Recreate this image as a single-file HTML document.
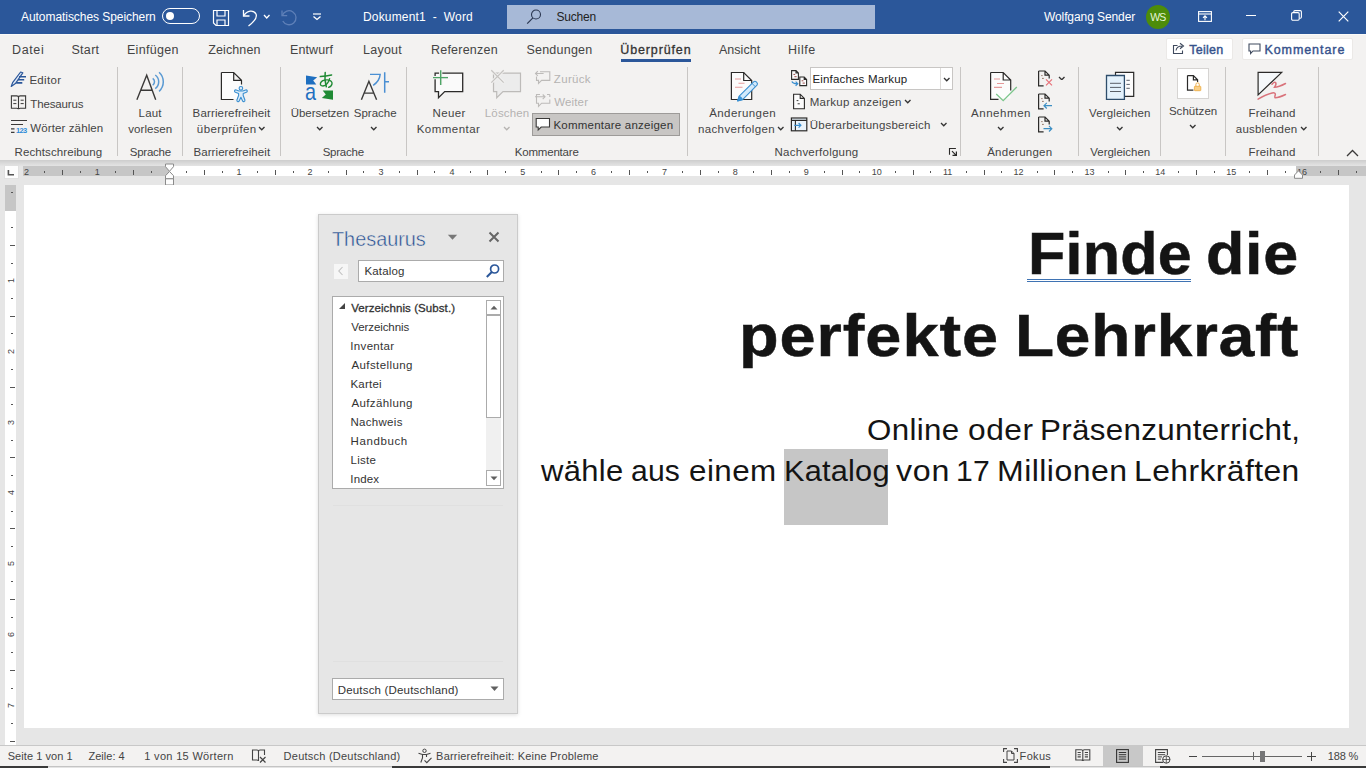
<!DOCTYPE html>
<html><head><meta charset="utf-8"><title>Dokument1 - Word</title><style>
html,body{margin:0;padding:0;}
body{width:1366px;height:768px;overflow:hidden;position:relative;background:#e6e6e6;font-family:"Liberation Sans",sans-serif;}
.t{position:absolute;white-space:pre;display:block;}
.r{position:absolute;display:block;box-sizing:border-box;}
</style></head><body>
<div class="r" style="left:0px;top:0px;width:1366px;height:34px;background:#2b579a;"></div>
<span class="t" style="left:21.00px;top:10px;font-size:12px;line-height:14px;letter-spacing:-0.059px;color:#ffffff;">Automatisches Speichern</span>
<div class="r" style="left:162px;top:8px;width:38px;height:16px;background:transparent;border:1.3px solid #fff;border-radius:8px;"></div>
<div class="r" style="left:166px;top:12px;width:8px;height:8px;background:#fff;border-radius:4px;"></div>
<svg class="r" style="left:212px;top:9px;" width="18" height="18" viewBox="0 0 18 18" fill="none"><path d="M1.5 1.5 H16.5 V16.5 H4 L1.5 14 Z" stroke="#fff" stroke-width="1.2"/><path d="M5 1.5 V7 H13 V1.5 M5 16.5 V11 H13 V16.5" stroke="#fff" stroke-width="1.2"/></svg>
<svg class="r" style="left:242px;top:8px;" width="18" height="19" viewBox="0 0 18 19" fill="none"><path d="M1.5 2 V8 H7.5" stroke="#fff" stroke-width="1.3"/><path d="M2 7.5 C5 2.5 11.5 1.5 14 6 C15.5 9.5 13 13 6.5 18" stroke="#fff" stroke-width="1.3"/></svg>
<svg class="r" style="left:262.75px;top:14.0px;" width="7.5" height="5" viewBox="0 0 7.5 5" fill="none"><path d="M1 1 L3.75 4 L6.5 1" stroke="#fff" stroke-width="1.3"/></svg>
<svg class="r" style="left:280px;top:8px;" width="18" height="19" viewBox="0 0 18 19" fill="none"><path d="M2 2.4 V7.6 H7.2" stroke="#5f80b8" stroke-width="1.3"/><path d="M2.4 7.4 A7 7 0 1 1 2.8 13" stroke="#5f80b8" stroke-width="1.3"/></svg>
<svg class="r" style="left:312px;top:11px;" width="10" height="10" viewBox="0 0 10 10" fill="none"><path d="M1 3 H9" stroke="#fff" stroke-width="1.2"/><path d="M1.5 5.5 L5 8.5 L8.5 5.5" stroke="#fff" stroke-width="1.3"/></svg>
<span class="t" style="left:363.04px;top:10px;font-size:12px;line-height:14px;letter-spacing:0.152px;color:#ffffff;">Dokument1  -  Word</span>
<div class="r" style="left:507px;top:5px;width:368px;height:24px;background:#a7b9d7;"></div>
<svg class="r" style="left:525px;top:8.2px;" width="18" height="18" viewBox="0 0 18 18" fill="none"><circle cx="11" cy="6.5" r="4.5" stroke="#2a3650" stroke-width="1.1"/><path d="M7.9 9.8 L2.2 15.6" stroke="#2a3650" stroke-width="1.2"/></svg>
<span class="t" style="left:556.46px;top:10px;font-size:12px;line-height:14px;letter-spacing:-0.172px;color:#222;">Suchen</span>
<span class="t" style="left:1043.94px;top:10px;font-size:12px;line-height:14px;letter-spacing:-0.087px;color:#ffffff;">Wolfgang Sender</span>
<div class="r" style="left:1146px;top:5px;width:24px;height:24px;background:#4d8c0a;border-radius:12px;"></div>
<span class="t" style="left:1150.15px;top:11px;font-size:10.5px;line-height:12px;letter-spacing:-0.780px;color:#e8f5d8;">WS</span>
<svg class="r" style="left:1197.5px;top:10.6px;" width="14" height="11" viewBox="0 0 14 11" fill="none"><rect x="0.6" y="0.6" width="12.8" height="9.8" stroke="#fff" stroke-width="1.1"/><path d="M0.6 3 H13.4" stroke="#fff" stroke-width="1.1"/><path d="M7 9.2 V5 M5 6.8 L7 4.8 L9 6.8" stroke="#fff" stroke-width="1.1"/></svg>
<div class="r" style="left:1246px;top:14.7px;width:10px;height:1.2px;background:#fff;"></div>
<svg class="r" style="left:1291.2px;top:10.4px;" width="11" height="11" viewBox="0 0 11 11" fill="none"><rect x="0.6" y="2.6" width="7.6" height="7.6" rx="1.2" stroke="#fff" stroke-width="1.1"/><path d="M2.8 2.4 V1.7 Q2.8 0.6 3.9 0.6 H9.3 Q10.4 0.6 10.4 1.7 V7.1 Q10.4 8.2 9.3 8.2 H8.4" stroke="#fff" stroke-width="1.1"/></svg>
<svg class="r" style="left:1337.5px;top:10.8px;" width="11" height="11" viewBox="0 0 11 11" fill="none"><path d="M0.7 0.7 L10.3 10.3 M10.3 0.7 L0.7 10.3" stroke="#fff" stroke-width="1.2"/></svg>
<div class="r" style="left:0px;top:34px;width:1366px;height:127px;background:#f3f2f1;"></div>
<div class="r" style="left:0px;top:34px;width:1366px;height:1px;background:#fafaf9;"></div>
<span class="t" style="left:12.00px;top:43px;font-size:12.5px;line-height:14px;letter-spacing:0.622px;color:#444;">Datei</span>
<span class="t" style="left:71.44px;top:43px;font-size:12.5px;line-height:14px;letter-spacing:0.312px;color:#444;">Start</span>
<span class="t" style="left:127.00px;top:43px;font-size:12.5px;line-height:14px;letter-spacing:0.286px;color:#444;">Einfügen</span>
<span class="t" style="left:208.22px;top:43px;font-size:12.5px;line-height:14px;letter-spacing:0.107px;color:#444;">Zeichnen</span>
<span class="t" style="left:290.00px;top:43px;font-size:12.5px;line-height:14px;letter-spacing:0.104px;color:#444;">Entwurf</span>
<span class="t" style="left:363.00px;top:43px;font-size:12.5px;line-height:14px;letter-spacing:0.252px;color:#444;">Layout</span>
<span class="t" style="left:431.00px;top:43px;font-size:12.5px;line-height:14px;letter-spacing:0.221px;color:#444;">Referenzen</span>
<span class="t" style="left:526.44px;top:43px;font-size:12.5px;line-height:14px;letter-spacing:0.230px;color:#444;">Sendungen</span>
<span class="t" style="left:719.00px;top:43px;font-size:12.5px;line-height:14px;letter-spacing:0.021px;color:#444;">Ansicht</span>
<span class="t" style="left:788.00px;top:43px;font-size:12.5px;line-height:14px;letter-spacing:0.541px;color:#444;">Hilfe</span>
<span class="t" style="left:620.26px;top:43px;font-size:12.5px;line-height:14px;letter-spacing:0.872px;color:#333;-webkit-text-stroke:0.3px #333;">Überprüfen</span>
<div class="r" style="left:621px;top:59px;width:70px;height:3px;background:#2b579a;"></div>
<div class="r" style="left:1166px;top:38px;width:67px;height:22px;background:#fff;border:1px solid #ebe9e7;border-radius:2px;"></div>
<svg class="r" style="left:1172px;top:42px;" width="14" height="13" viewBox="0 0 14 13" fill="none"><path d="M5.5 3.5 H1.5 V11.5 H10.5 V8.5" stroke="#3f4a5e" stroke-width="1.1"/><path d="M4 8.5 C4.5 5.5 7 4 10 4 M8 1.2 L11.5 4 L8 6.8" stroke="#3f4a5e" stroke-width="1.1"/></svg>
<span class="t" style="left:1189.25px;top:43px;font-size:12.5px;line-height:14px;letter-spacing:0.268px;color:#36528c;-webkit-text-stroke:0.4px #36528c;">Teilen</span>
<div class="r" style="left:1241.5px;top:38px;width:111.5px;height:22px;background:#fff;border:1px solid #ebe9e7;border-radius:2px;"></div>
<svg class="r" style="left:1248px;top:43px;" width="13" height="12" viewBox="0 0 13 12" fill="none"><path d="M1 1 H12 V8 H5 L2.6 10.6 V8 H1 Z" stroke="#3f4a5e" stroke-width="1.1"/></svg>
<span class="t" style="left:1264.40px;top:43px;font-size:12.5px;line-height:14px;letter-spacing:0.933px;color:#36528c;-webkit-text-stroke:0.4px #36528c;">Kommentare</span>
<div class="r" style="left:0px;top:160px;width:1366px;height:6px;background:linear-gradient(#cdcdcd,#d9d9d9 50%,#e4e4e4);"></div>
<div class="r" style="left:117.0px;top:67px;width:1px;height:89px;background:#c8c6c4;"></div>
<div class="r" style="left:182.0px;top:67px;width:1px;height:89px;background:#c8c6c4;"></div>
<div class="r" style="left:280.2px;top:67px;width:1px;height:89px;background:#c8c6c4;"></div>
<div class="r" style="left:406.1px;top:67px;width:1px;height:89px;background:#c8c6c4;"></div>
<div class="r" style="left:687.2px;top:67px;width:1px;height:89px;background:#c8c6c4;"></div>
<div class="r" style="left:960.3px;top:67px;width:1px;height:89px;background:#c8c6c4;"></div>
<div class="r" style="left:1078.1px;top:67px;width:1px;height:89px;background:#c8c6c4;"></div>
<div class="r" style="left:1159.8px;top:67px;width:1px;height:89px;background:#c8c6c4;"></div>
<div class="r" style="left:1225.1px;top:67px;width:1px;height:89px;background:#c8c6c4;"></div>
<div class="r" style="left:1318.2px;top:67px;width:1px;height:89px;background:#c8c6c4;"></div>
<span class="t" style="left:29.38px;top:74px;font-size:11.5px;line-height:12px;letter-spacing:0.315px;color:#444;">Editor</span>
<span class="t" style="left:30.37px;top:98px;font-size:11.5px;line-height:12px;letter-spacing:-0.163px;color:#444;">Thesaurus</span>
<span class="t" style="left:30.24px;top:122px;font-size:11.5px;line-height:12px;letter-spacing:0.118px;color:#444;">Wörter zählen</span>
<span class="t" style="left:14.48px;top:146px;font-size:11.5px;line-height:12px;letter-spacing:0.104px;color:#444;">Rechtschreibung</span>
<svg class="r" style="left:10px;top:70px;" width="18" height="18" viewBox="0 0 18 18" fill="none"><path d="M1.2 16.4 L2.8 12.3 L10.6 2 L12.8 2.8 L5.4 13.6 Z" stroke="#2b579a" stroke-width="1.2" stroke-linejoin="round" fill="#dfe8f5"/><path d="M9 6.8 H16 M8 9.8 H14.2 M6.2 12.9 H12.3" stroke="#2b579a" stroke-width="1.6"/></svg>
<svg class="r" style="left:10px;top:94px;" width="18" height="17" viewBox="0 0 18 17" fill="none"><path d="M1.4 1.9 H6.8 Q8.5 1.9 8.5 3.4 V15.3 Q8.5 14.3 6.8 14.3 H1.4 Z M15.6 1.9 H10.2 Q8.5 1.9 8.5 3.4 V15.3 Q8.5 14.3 10.2 14.3 H15.6 Z" stroke="#3b3a39" stroke-width="1.1"/><path d="M3.3 6.2 H6.4 M3.3 9.6 H6.4 M10.6 6.2 H13.7 M10.6 9.6 H13.7" stroke="#3b3a39" stroke-width="1"/></svg>
<svg class="r" style="left:10px;top:118px;" width="18" height="17" viewBox="0 0 18 17" fill="none"><path d="M1 2.5 H17 M1 6.5 H13" stroke="#3b3a39" stroke-width="1.1"/><path d="M1 10.8 H4.5 M1 14.3 H4.5" stroke="#3b3a39" stroke-width="1.2"/></svg>
<span class="t" style="left:15.95px;top:126px;font-size:7.5px;line-height:9px;letter-spacing:-0.587px;color:#2e8bd8;font-weight:bold;">123</span>
<span class="t" style="left:138.58px;top:107px;font-size:11.5px;line-height:12px;letter-spacing:0.203px;color:#444;">Laut</span>
<span class="t" style="left:128.34px;top:123px;font-size:11.5px;line-height:12px;letter-spacing:0.034px;color:#444;">vorlesen</span>
<span class="t" style="left:129.78px;top:146px;font-size:11.5px;line-height:12px;letter-spacing:-0.250px;color:#444;">Sprache</span>
<svg class="r" style="left:135px;top:70px;" width="32" height="32" viewBox="0 0 32 32" fill="none"><path d="M1.9 29.8 L11.7 5.2 L20.7 29.8 M5.6 20.3 H17.2" stroke="#3b3a39" stroke-width="1.4"/><path d="M17.71 8.36 A4.2 4.2 0 0 1 17.71 15.24 M20.24 5.00 A8.4 8.4 0 0 1 20.24 18.60 M24.08 2.22 A13 13 0 0 1 24.08 21.38" stroke="#5a9ad3" stroke-width="1.5"/></svg>
<span class="t" style="left:192.58px;top:107px;font-size:11.5px;line-height:12px;letter-spacing:0.146px;color:#444;">Barrierefreiheit</span>
<span class="t" style="left:196.85px;top:123px;font-size:11.5px;line-height:12px;letter-spacing:0.421px;color:#444;">überprüfen</span>
<svg class="r" style="left:258.25px;top:125.79999999999998px;" width="7.5" height="4.8" viewBox="0 0 7.5 4.8" fill="none"><path d="M1 1 L3.75 3.8 L6.5 1" stroke="#333" stroke-width="1.3"/></svg>
<span class="t" style="left:193.48px;top:146px;font-size:11.5px;line-height:12px;letter-spacing:0.080px;color:#444;">Barrierefreiheit</span>
<svg class="r" style="left:220px;top:71px;" width="30" height="32" viewBox="0 0 30 32" fill="none"><path d="M2 2.1 H13.4 V9.6 H20.9 V27.9 H2 Z" fill="#fcfcfc"/><path d="M1.4 1.5 H13.7 L21.5 9.3 V13.5 M1.4 1.5 V28.5 H13.5 M13.7 1.5 V9.3 H21.5" stroke="#2b2a29" stroke-width="1.2" fill="none"/><path d="M14.6 19.6 Q14.2 20.8 15.4 21.3 L18.6 22.4 V24.5 L16.9 29 Q16.6 30.2 17.7 30.6 Q18.8 30.9 19.3 29.8 L20.9 26.3 L22.5 29.8 Q23 30.9 24.1 30.6 Q25.2 30.2 24.9 29 L23.2 24.5 V22.4 L26.4 21.3 Q27.6 20.8 27.2 19.6 Q26.7 18.6 25.6 19 L22.8 20 H19 L16.2 19 Q15.1 18.6 14.6 19.6 Z" stroke="#3a8fd0" stroke-width="1.1" fill="#dcecf9" stroke-linejoin="round"/><circle cx="20.9" cy="17.3" r="1.8" stroke="#3a8fd0" stroke-width="1.1" fill="#dcecf9"/></svg>
<span class="t" style="left:290.74px;top:107px;font-size:11.5px;line-height:12px;letter-spacing:-0.057px;color:#444;">Übersetzen</span>
<svg class="r" style="left:315.55px;top:125.79999999999998px;" width="7.5" height="4.8" viewBox="0 0 7.5 4.8" fill="none"><path d="M1 1 L3.75 3.8 L6.5 1" stroke="#333" stroke-width="1.3"/></svg>
<span class="t" style="left:353.78px;top:107px;font-size:11.5px;line-height:12px;letter-spacing:-0.000px;color:#444;">Sprache</span>
<svg class="r" style="left:370.35px;top:125.79999999999998px;" width="7.5" height="4.8" viewBox="0 0 7.5 4.8" fill="none"><path d="M1 1 L3.75 3.8 L6.5 1" stroke="#333" stroke-width="1.3"/></svg>
<span class="t" style="left:322.68px;top:146px;font-size:11.5px;line-height:12px;letter-spacing:-0.234px;color:#444;">Sprache</span>
<svg class="r" style="left:305px;top:71px;" width="30" height="30" viewBox="0 0 30 30" fill="none"><path d="M1 4.5 L12.2 6.3 L8.2 9.6 L11.3 13.6 H1 Z" fill="#1e6fc0"/><path d="M28 28.7 L16.8 26.9 L20.8 23.6 L17.7 19.4 H28 Z" fill="#1f8a34"/><path d="M15.3 5.6 Q21 5.2 26.6 4" stroke="#1f8a34" stroke-width="1.5" stroke-linecap="round"/><path d="M20.2 1.5 Q19.2 8.5 21.3 15.8" stroke="#1f8a34" stroke-width="1.5" stroke-linecap="round"/><path d="M24.6 7.6 Q22.6 14.6 18 15 Q14.6 15 15.6 11.8 Q17.3 8.6 22.5 8.9 Q27.5 9.5 27 12.8 Q26.6 15.3 23.6 16.3" stroke="#1f8a34" stroke-width="1.4" stroke-linecap="round"/></svg>
<span class="t" style="left:305.11px;top:78px;font-size:24px;line-height:27px;letter-spacing:0.000px;color:#1e6fc0;transform:scaleX(0.8252);transform-origin:0 0;">a</span>
<svg class="r" style="left:359px;top:71px;" width="32" height="30" viewBox="0 0 32 30" fill="none"><path d="M2.4 28.7 L9.9 10.3 L17.6 28.7 M5 22.1 H14.9" stroke="#3b3a39" stroke-width="1.4"/><path d="M11 3.4 H21.2 Q20.6 10 14.2 14.4" stroke="#4a8fd3" stroke-width="1.4"/><path d="M25.7 1.2 V21.7 M25.7 10.7 H30" stroke="#4a8fd3" stroke-width="1.5"/></svg>
<span class="t" style="left:432.48px;top:107px;font-size:11.5px;line-height:12px;letter-spacing:0.403px;color:#444;">Neuer</span>
<span class="t" style="left:416.68px;top:123px;font-size:11.5px;line-height:12px;letter-spacing:0.474px;color:#444;">Kommentar</span>
<span class="t" style="left:484.78px;top:107px;font-size:11.5px;line-height:12px;letter-spacing:0.166px;color:#b5b3b1;">Löschen</span>
<svg class="r" style="left:502.75px;top:126.1px;" width="7.5" height="4.8" viewBox="0 0 7.5 4.8" fill="none"><path d="M1 1 L3.75 3.8 L6.5 1" stroke="#b5b3b1" stroke-width="1.3"/></svg>
<span class="t" style="left:553.86px;top:73px;font-size:11.5px;line-height:12px;letter-spacing:0.322px;color:#b5b3b1;">Zurück</span>
<span class="t" style="left:554.14px;top:96px;font-size:11.5px;line-height:12px;letter-spacing:0.165px;color:#b5b3b1;">Weiter</span>
<div class="r" style="left:532px;top:113px;width:148px;height:23px;background:#c8c6c4;border:1px solid #9d9b99;"></div>
<span class="t" style="left:553.48px;top:119px;font-size:11.5px;line-height:12px;letter-spacing:0.215px;color:#333;">Kommentare anzeigen</span>
<span class="t" style="left:514.78px;top:146px;font-size:11.5px;line-height:12px;letter-spacing:-0.200px;color:#444;">Kommentare</span>
<svg class="r" style="left:431px;top:68px;" width="34" height="32" viewBox="0 0 34 32" fill="none"><path d="M4.1 5.2 H31.7 V23.6 H13.7 L7.5 29.8 V23.6 H4.1 Z" stroke="#2b2a29" stroke-width="1.3" fill="#fafafa"/><path d="M9.7 2.2 V16.9 M2 9.6 H17" stroke="#f3f2f1" stroke-width="3.2"/><path d="M9.7 2.2 V16.9 M2 9.6 H17" stroke="#4ea567" stroke-width="1.4"/></svg>
<svg class="r" style="left:489px;top:68px;" width="34" height="32" viewBox="0 0 34 32" fill="none"><path d="M4.5 5.2 H31.5 V23.6 H14 L7.7 29.8 V23.6 H4.5 Z" stroke="#bdbbb9" stroke-width="1.2" fill="#ececec"/><path d="M2.3 2.2 L14.7 14.6 M14.7 2.2 L2.3 14.6" stroke="#f3f2f1" stroke-width="3"/><path d="M2.3 2.2 L14.7 14.6 M14.7 2.2 L2.3 14.6" stroke="#c6c4c2" stroke-width="1.3"/></svg>
<svg class="r" style="left:534px;top:70px;" width="17" height="16" viewBox="0 0 17 16" fill="none"><path d="M6 1.8 H15.8 V10.4 H7.6 L4.5 13.5 V10.4 H2.5 V6.5" stroke="#bdbbb9" stroke-width="1.1"/><path d="M9.6 3.5 H1.5 M3.8 1.2 L1.5 3.5 L3.8 5.8" stroke="#bdbbb9" stroke-width="1.1"/></svg>
<svg class="r" style="left:534px;top:93px;" width="17" height="16" viewBox="0 0 17 16" fill="none"><path d="M6 1.5 H2.5 V10.2 H4.5 V13.3 L7.6 10.2 H15.8 V6.5" stroke="#bdbbb9" stroke-width="1.1"/><path d="M1 3.8 H11 M8.7 1.5 L11 3.8 L8.7 6.1" stroke="#bdbbb9" stroke-width="1.1"/><path d="M15.8 1.5 H13 M15.8 1.5 V4" stroke="#bdbbb9" stroke-width="1.1"/></svg>
<svg class="r" style="left:535px;top:117px;" width="16" height="15" viewBox="0 0 16 15" fill="none"><path d="M1.2 1.5 H14.5 V10 H6.2 L3.2 13 V10 H1.2 Z" stroke="#3b3a39" stroke-width="1.1" fill="#fff"/></svg>
<span class="t" style="left:709.20px;top:107px;font-size:11.5px;line-height:12px;letter-spacing:0.419px;color:#444;">Änderungen</span>
<span class="t" style="left:697.95px;top:123px;font-size:11.5px;line-height:12px;letter-spacing:0.381px;color:#444;">nachverfolgen</span>
<svg class="r" style="left:776.65px;top:126.1px;" width="7.5" height="4.8" viewBox="0 0 7.5 4.8" fill="none"><path d="M1 1 L3.75 3.8 L6.5 1" stroke="#333" stroke-width="1.3"/></svg>
<span class="t" style="left:774.58px;top:146px;font-size:11.5px;line-height:12px;letter-spacing:0.239px;color:#444;">Nachverfolgung</span>
<svg class="r" style="left:730px;top:70px;" width="30" height="33" viewBox="0 0 30 33" fill="none"><path d="M1.4 2.5 H13.7 L21.7 10.5 V29.5 H1.4 Z" stroke="#2b2a29" stroke-width="1.2" fill="#fcfcfc"/><path d="M13.7 2.5 V10.5 H21.7" stroke="#2b2a29" stroke-width="1.2"/><path d="M5 9 H11 M8.5 13.2 H14.5 M5 17.2 H12.5" stroke="#e59a9a" stroke-width="1.1"/><path d="M7.6 31 L9.2 26.2 L23.6 11.8 Q25 10.6 26.6 12.2 Q28.2 13.8 27 15.2 L12.6 29.6 Z" fill="#d3eafb" stroke="#3a8fd0" stroke-width="1.1" stroke-linejoin="round"/><path d="M7.6 31 L9.2 26.2 Q11.5 26.6 12.6 29.6 Z" fill="#3a96dd" stroke="#3a8fd0" stroke-width="0.8"/><path d="M22 13.4 L25.4 16.8" stroke="#3a8fd0" stroke-width="1"/></svg>
<svg class="r" style="left:790px;top:69px;" width="18" height="19" viewBox="0 0 18 19" fill="none"><path d="M1.6 1.6 H6 L8.4 4 V10.4 H1.6 Z M6 1.6 V4 H8.4" stroke="#2b2a29" stroke-width="1.1" fill="#fcfcfc"/><path d="M9.8 8 H14.2 L16.6 10.4 V16.6 H9.8 Z M14.2 8 V10.4 H16.6" stroke="#2b2a29" stroke-width="1.1" fill="#fcfcfc"/><path d="M3.4 5.4 H5.2 M4.4 7.7 H6.6 M11.6 11.8 H13.4 M12.6 14.1 H14.8" stroke="#9c4a4a" stroke-width="1"/><path d="M2 12.4 Q2.4 14.8 7.6 14.7 M5.6 12.6 L7.8 14.7 L5.6 16.8" stroke="#3a8fd0" stroke-width="1.2"/></svg>
<div class="r" style="left:810px;top:67px;width:143px;height:22.5px;background:#fff;border:1px solid #c8c6c4;"></div>
<div class="r" style="left:939.5px;top:68px;width:1px;height:20.5px;background:#dddbd9;"></div>
<span class="t" style="left:812.38px;top:73px;font-size:11.5px;line-height:12px;letter-spacing:0.182px;color:#222;">Einfaches Markup</span>
<svg class="r" style="left:942.65px;top:76.89999999999999px;" width="7.5" height="4.8" viewBox="0 0 7.5 4.8" fill="none"><path d="M1 1 L3.75 3.8 L6.5 1" stroke="#333" stroke-width="1.3"/></svg>
<svg class="r" style="left:792px;top:92.5px;" width="14" height="17" viewBox="0 0 14 17" fill="none"><path d="M1.6 1.2 H8.2 L12.4 5.4 V15.8 H1.6 Z M8.2 1.2 V5.4 H12.4" stroke="#2b2a29" stroke-width="1.1" fill="#fcfcfc"/><path d="M4.6 7.6 H6.4 M5.6 10.8 H7.8" stroke="#3b3a39" stroke-width="1"/></svg>
<span class="t" style="left:809.78px;top:96px;font-size:11.5px;line-height:12px;letter-spacing:0.247px;color:#444;">Markup anzeigen</span>
<svg class="r" style="left:904.05px;top:98.89999999999999px;" width="7.5" height="4.8" viewBox="0 0 7.5 4.8" fill="none"><path d="M1 1 L3.75 3.8 L6.5 1" stroke="#333" stroke-width="1.3"/></svg>
<svg class="r" style="left:790px;top:116.5px;" width="18" height="15" viewBox="0 0 18 15" fill="none"><rect x="1.4" y="1" width="15.4" height="12.8" stroke="#2b2a29" stroke-width="1.2" fill="#eaf4fc"/><path d="M1.4 3.4 H16.8 M5.4 3.4 V13.8" stroke="#2b2a29" stroke-width="1.1"/><path d="M4.2 8.3 H10.8 M8.6 6 L10.9 8.3 L8.6 10.6" stroke="#3a8fd0" stroke-width="1.2"/></svg>
<span class="t" style="left:809.84px;top:119px;font-size:11.5px;line-height:12px;letter-spacing:0.214px;color:#444;">Überarbeitungsbereich</span>
<svg class="r" style="left:939.85px;top:122.19999999999999px;" width="7.5" height="4.8" viewBox="0 0 7.5 4.8" fill="none"><path d="M1 1 L3.75 3.8 L6.5 1" stroke="#333" stroke-width="1.3"/></svg>
<svg class="r" style="left:948px;top:147px;" width="10" height="10" viewBox="0 0 10 10" fill="none"><path d="M1.5 7.7 V1.5 H7.9" stroke="#2b2a29" stroke-width="1.1"/><path d="M4 4.2 L8.2 8.4 M4.5 8.4 H8.4 V4.5" stroke="#2b2a29" stroke-width="1.2"/></svg>
<span class="t" style="left:971.00px;top:107px;font-size:11.5px;line-height:12px;letter-spacing:0.549px;color:#444;">Annehmen</span>
<svg class="r" style="left:996.65px;top:125.79999999999998px;" width="7.5" height="4.8" viewBox="0 0 7.5 4.8" fill="none"><path d="M1 1 L3.75 3.8 L6.5 1" stroke="#333" stroke-width="1.3"/></svg>
<span class="t" style="left:987.20px;top:146px;font-size:11.5px;line-height:12px;letter-spacing:0.253px;color:#444;">Änderungen</span>
<svg class="r" style="left:988px;top:70px;" width="32" height="33" viewBox="0 0 32 33" fill="none"><path d="M3.2 3.1 H15 L22.4 10.5 V28.4 H3.2Z" fill="#fcfcfc"/><path d="M2.6 2.5 H15.2 L22.7 10 V20.5 M2.6 2.5 V29.3 H10.5 M15.2 2.5 V10 H22.7" stroke="#2b2a29" stroke-width="1.2"/><path d="M6 9 H12 M9 13.5 H16 M6 17.4 H14" stroke="#e59a9a" stroke-width="1.1"/><path d="M8.2 24 L15.2 30.6 L28.8 17" stroke="#7cc68c" stroke-width="1.3"/></svg>
<svg class="r" style="left:1036.5px;top:69.5px;" width="18" height="18" viewBox="0 0 18 18" fill="none"><path d="M1.6 1 H8 L12.2 5.2 V8.6 M1.6 1 V15.8 H6.6 M8 1 V5.2 H12.2" stroke="#2b2a29" stroke-width="1.2"/><path d="M4.2 5.6 H5.6 M5 8.4 H6.8" stroke="#8a6a5a" stroke-width="0.9"/><path d="M9 9.4 L15 15.4 M15 9.4 L9 15.4" stroke="#e8727a" stroke-width="1.2"/></svg>
<svg class="r" style="left:1057.75px;top:75.6px;" width="7.5" height="4.8" viewBox="0 0 7.5 4.8" fill="none"><path d="M1 1 L3.75 3.8 L6.5 1" stroke="#333" stroke-width="1.3"/></svg>
<svg class="r" style="left:1036.5px;top:92.7px;" width="18" height="18" viewBox="0 0 18 18" fill="none"><path d="M1.6 1 H8 L12.2 5.2 V8.6 M1.6 1 V15.8 H6.6 M8 1 V5.2 H12.2" stroke="#2b2a29" stroke-width="1.2"/><path d="M4.2 5.6 H5.6 M5 8.4 H6.8" stroke="#8a6a5a" stroke-width="0.9"/><path d="M15 12.7 H7 M9.8 9.9 L7 12.7 L9.8 15.5" stroke="#3d8fc4" stroke-width="1.2"/></svg>
<svg class="r" style="left:1036.5px;top:115.5px;" width="18" height="18" viewBox="0 0 18 18" fill="none"><path d="M1.6 1 H8 L12.2 5.2 V8.6 M1.6 1 V15.8 H6.6 M8 1 V5.2 H12.2" stroke="#2b2a29" stroke-width="1.2"/><path d="M4.2 5.6 H5.6 M5 8.4 H6.8" stroke="#8a6a5a" stroke-width="0.9"/><path d="M6.5 12.7 H14.8 M12 9.9 L14.8 12.7 L12 15.5" stroke="#3d8fc4" stroke-width="1.2"/></svg>
<span class="t" style="left:1089.04px;top:107px;font-size:11.5px;line-height:12px;letter-spacing:0.132px;color:#444;">Vergleichen</span>
<svg class="r" style="left:1115.55px;top:125.79999999999998px;" width="7.5" height="4.8" viewBox="0 0 7.5 4.8" fill="none"><path d="M1 1 L3.75 3.8 L6.5 1" stroke="#333" stroke-width="1.3"/></svg>
<span class="t" style="left:1090.34px;top:146px;font-size:11.5px;line-height:12px;letter-spacing:-0.028px;color:#444;">Vergleichen</span>
<svg class="r" style="left:1104px;top:70px;" width="32" height="32" viewBox="0 0 32 32" fill="none"><path d="M11.5 2.4 H29.7 V26.4 H11.5 Z" stroke="#2b2a29" stroke-width="1.2" fill="#fcfcfc"/><path d="M22.4 10.3 H25.8 M22.4 14.4 H25.8 M22.4 18.3 H25.8" stroke="#5a6068" stroke-width="1"/><path d="M2.5 5.5 H20.4 V29.3 H2.5 Z" stroke="#2d4d6b" stroke-width="1.3" fill="#e4f2fc"/><path d="M6 13.3 H17 M6 17.4 H17 M6 21.5 H17" stroke="#5a6068" stroke-width="1"/></svg>
<div class="r" style="left:1177px;top:68px;width:32px;height:31px;background:#fff;border:1px solid #d6d4d2;"></div>
<svg class="r" style="left:1186px;top:74px;" width="17" height="18" viewBox="0 0 17 18" fill="none"><path d="M1.5 1.6 H7.4 L11.6 5.8 V8 M1.5 1.6 V16.2 H7.4 M7.4 1.6 V5.8 H11.6" stroke="#2b2a29" stroke-width="1.2"/><rect x="8.4" y="12.3" width="6.4" height="4.4" rx="0.6" fill="#f9cf86" stroke="#eeb04c" stroke-width="0.9"/><path d="M9.9 12.2 V10.6 Q9.9 8.8 11.6 8.8 Q13.3 8.8 13.3 10.6 V12.2" stroke="#eeb04c" stroke-width="1"/></svg>
<span class="t" style="left:1168.88px;top:105px;font-size:11.5px;line-height:12px;letter-spacing:0.059px;color:#444;">Schützen</span>
<svg class="r" style="left:1188.65px;top:124.0px;" width="7.5" height="4.8" viewBox="0 0 7.5 4.8" fill="none"><path d="M1 1 L3.75 3.8 L6.5 1" stroke="#333" stroke-width="1.3"/></svg>
<span class="t" style="left:1248.38px;top:107px;font-size:11.5px;line-height:12px;letter-spacing:0.243px;color:#444;">Freihand</span>
<span class="t" style="left:1235.84px;top:123px;font-size:11.5px;line-height:12px;letter-spacing:0.206px;color:#444;">ausblenden</span>
<svg class="r" style="left:1299.65px;top:125.79999999999998px;" width="7.5" height="4.8" viewBox="0 0 7.5 4.8" fill="none"><path d="M1 1 L3.75 3.8 L6.5 1" stroke="#333" stroke-width="1.3"/></svg>
<span class="t" style="left:1248.38px;top:146px;font-size:11.5px;line-height:12px;letter-spacing:0.243px;color:#444;">Freihand</span>
<svg class="r" style="left:1256px;top:70px;" width="32" height="32" viewBox="0 0 32 32" fill="none"><path d="M2.1 2.4 H25.7 L2.1 24.9 Z" stroke="#2b2a29" stroke-width="1.2" fill="#f5f8fa"/><path d="M16 14.2 Q18.6 11.4 19.7 12.7 Q20.6 14.4 18.6 17.3 Q22.5 17.2 29.5 13.5" stroke="#d9737b" stroke-width="1.5" stroke-linecap="round"/><path d="M2.1 29.2 Q10 24.5 16.2 23 Q19.6 22.2 19.3 24.8 Q18.4 27.4 19.2 27.8 Q23 27.6 29.5 24.5" stroke="#d9737b" stroke-width="1.5" stroke-linecap="round"/></svg>
<svg class="r" style="left:1346px;top:149px;" width="13" height="8" viewBox="0 0 13 8" fill="none"><path d="M1 7 L6.5 1.5 L12 7" stroke="#3b3a39" stroke-width="1.3"/></svg>
<div class="r" style="left:23px;top:166px;width:1343px;height:10px;background:#c6c6c6;"></div>
<div class="r" style="left:169px;top:166px;width:1127px;height:10px;background:#ffffff;"></div>
<span class="t" style="left:24.11px;top:167px;font-size:9px;line-height:10px;letter-spacing:0.000px;color:#444;">2</span>
<div class="r" style="left:44px;top:171px;width:1px;height:2px;background:#555;"></div>
<div class="r" style="left:62px;top:170px;width:1px;height:5px;background:#555;"></div>
<div class="r" style="left:80px;top:171px;width:1px;height:2px;background:#555;"></div>
<span class="t" style="left:94.75px;top:167px;font-size:9px;line-height:10px;letter-spacing:0.000px;color:#444;">1</span>
<div class="r" style="left:115px;top:171px;width:1px;height:2px;background:#555;"></div>
<div class="r" style="left:133px;top:170px;width:1px;height:5px;background:#555;"></div>
<div class="r" style="left:151px;top:171px;width:1px;height:2px;background:#555;"></div>
<div class="r" style="left:186px;top:171px;width:1px;height:2px;background:#555;"></div>
<div class="r" style="left:204px;top:170px;width:1px;height:5px;background:#555;"></div>
<div class="r" style="left:222px;top:171px;width:1px;height:2px;background:#555;"></div>
<span class="t" style="left:236.49px;top:167px;font-size:9px;line-height:10px;letter-spacing:0.000px;color:#444;">1</span>
<div class="r" style="left:257px;top:171px;width:1px;height:2px;background:#555;"></div>
<div class="r" style="left:275px;top:170px;width:1px;height:5px;background:#555;"></div>
<div class="r" style="left:293px;top:171px;width:1px;height:2px;background:#555;"></div>
<span class="t" style="left:307.59px;top:167px;font-size:9px;line-height:10px;letter-spacing:0.000px;color:#444;">2</span>
<div class="r" style="left:328px;top:171px;width:1px;height:2px;background:#555;"></div>
<div class="r" style="left:346px;top:170px;width:1px;height:5px;background:#555;"></div>
<div class="r" style="left:363px;top:171px;width:1px;height:2px;background:#555;"></div>
<span class="t" style="left:378.55px;top:167px;font-size:9px;line-height:10px;letter-spacing:0.000px;color:#444;">3</span>
<div class="r" style="left:399px;top:171px;width:1px;height:2px;background:#555;"></div>
<div class="r" style="left:417px;top:170px;width:1px;height:5px;background:#555;"></div>
<div class="r" style="left:434px;top:171px;width:1px;height:2px;background:#555;"></div>
<span class="t" style="left:449.60px;top:167px;font-size:9px;line-height:10px;letter-spacing:0.000px;color:#444;">4</span>
<div class="r" style="left:470px;top:171px;width:1px;height:2px;background:#555;"></div>
<div class="r" style="left:487px;top:170px;width:1px;height:5px;background:#555;"></div>
<div class="r" style="left:505px;top:171px;width:1px;height:2px;background:#555;"></div>
<span class="t" style="left:520.29px;top:167px;font-size:9px;line-height:10px;letter-spacing:0.000px;color:#444;">5</span>
<div class="r" style="left:541px;top:171px;width:1px;height:2px;background:#555;"></div>
<div class="r" style="left:558px;top:170px;width:1px;height:5px;background:#555;"></div>
<div class="r" style="left:576px;top:171px;width:1px;height:2px;background:#555;"></div>
<span class="t" style="left:591.07px;top:167px;font-size:9px;line-height:10px;letter-spacing:0.000px;color:#444;">6</span>
<div class="r" style="left:611px;top:171px;width:1px;height:2px;background:#555;"></div>
<div class="r" style="left:629px;top:170px;width:1px;height:5px;background:#555;"></div>
<div class="r" style="left:647px;top:171px;width:1px;height:2px;background:#555;"></div>
<span class="t" style="left:661.94px;top:167px;font-size:9px;line-height:10px;letter-spacing:0.000px;color:#444;">7</span>
<div class="r" style="left:682px;top:171px;width:1px;height:2px;background:#555;"></div>
<div class="r" style="left:700px;top:170px;width:1px;height:5px;background:#555;"></div>
<div class="r" style="left:718px;top:171px;width:1px;height:2px;background:#555;"></div>
<span class="t" style="left:732.85px;top:167px;font-size:9px;line-height:10px;letter-spacing:0.000px;color:#444;">8</span>
<div class="r" style="left:753px;top:171px;width:1px;height:2px;background:#555;"></div>
<div class="r" style="left:771px;top:170px;width:1px;height:5px;background:#555;"></div>
<div class="r" style="left:789px;top:171px;width:1px;height:2px;background:#555;"></div>
<span class="t" style="left:803.72px;top:167px;font-size:9px;line-height:10px;letter-spacing:0.000px;color:#444;">9</span>
<div class="r" style="left:824px;top:171px;width:1px;height:2px;background:#555;"></div>
<div class="r" style="left:842px;top:170px;width:1px;height:5px;background:#555;"></div>
<div class="r" style="left:859px;top:171px;width:1px;height:2px;background:#555;"></div>
<span class="t" style="left:871.82px;top:167px;font-size:9px;line-height:10px;letter-spacing:0.000px;color:#444;">10</span>
<div class="r" style="left:895px;top:171px;width:1px;height:2px;background:#555;"></div>
<div class="r" style="left:913px;top:170px;width:1px;height:5px;background:#555;"></div>
<div class="r" style="left:930px;top:171px;width:1px;height:2px;background:#555;"></div>
<span class="t" style="left:943.02px;top:167px;font-size:9px;line-height:10px;letter-spacing:0.000px;color:#444;">11</span>
<div class="r" style="left:966px;top:171px;width:1px;height:2px;background:#555;"></div>
<div class="r" style="left:984px;top:170px;width:1px;height:5px;background:#555;"></div>
<div class="r" style="left:1001px;top:171px;width:1px;height:2px;background:#555;"></div>
<span class="t" style="left:1013.56px;top:167px;font-size:9px;line-height:10px;letter-spacing:0.000px;color:#444;">12</span>
<div class="r" style="left:1037px;top:171px;width:1px;height:2px;background:#555;"></div>
<div class="r" style="left:1054px;top:170px;width:1px;height:5px;background:#555;"></div>
<div class="r" style="left:1072px;top:171px;width:1px;height:2px;background:#555;"></div>
<span class="t" style="left:1084.43px;top:167px;font-size:9px;line-height:10px;letter-spacing:0.000px;color:#444;">13</span>
<div class="r" style="left:1108px;top:171px;width:1px;height:2px;background:#555;"></div>
<div class="r" style="left:1125px;top:170px;width:1px;height:5px;background:#555;"></div>
<div class="r" style="left:1143px;top:171px;width:1px;height:2px;background:#555;"></div>
<span class="t" style="left:1155.30px;top:167px;font-size:9px;line-height:10px;letter-spacing:0.000px;color:#444;">14</span>
<div class="r" style="left:1178px;top:171px;width:1px;height:2px;background:#555;"></div>
<div class="r" style="left:1196px;top:170px;width:1px;height:5px;background:#555;"></div>
<div class="r" style="left:1214px;top:171px;width:1px;height:2px;background:#555;"></div>
<span class="t" style="left:1226.17px;top:167px;font-size:9px;line-height:10px;letter-spacing:0.000px;color:#444;">15</span>
<div class="r" style="left:1249px;top:171px;width:1px;height:2px;background:#555;"></div>
<div class="r" style="left:1267px;top:170px;width:1px;height:5px;background:#555;"></div>
<div class="r" style="left:1285px;top:171px;width:1px;height:2px;background:#555;"></div>
<span class="t" style="left:1297.04px;top:167px;font-size:9px;line-height:10px;letter-spacing:0.000px;color:#444;">16</span>
<div class="r" style="left:1320px;top:171px;width:1px;height:2px;background:#555;"></div>
<div class="r" style="left:1338px;top:170px;width:1px;height:5px;background:#555;"></div>
<div class="r" style="left:1356px;top:171px;width:1px;height:2px;background:#555;"></div>
<div class="r" style="left:4px;top:164.5px;width:14.5px;height:14.5px;background:#fdfdfd;border:1px solid #e0e0e0;"></div>
<svg class="r" style="left:7px;top:169px;" width="8" height="8" viewBox="0 0 8 8" fill="none"><path d="M1.4 1 V5.7 H7" stroke="#555" stroke-width="1.6"/></svg>
<svg class="r" style="left:164px;top:162.5px;" width="11" height="23" viewBox="0 0 11 23" fill="none"><path d="M1.5 1 H9.5 V3.7 L5.5 8.3 L1.5 3.7 Z" fill="#fdfdfd" stroke="#8a8a8a" stroke-width="1"/><path d="M1.5 15.8 V12.7 L5.5 8.5 L9.5 12.7 V15.8 Z" fill="#fdfdfd" stroke="#8a8a8a" stroke-width="1"/><rect x="1.5" y="15.8" width="8" height="6.2" fill="#fdfdfd" stroke="#8a8a8a" stroke-width="1"/></svg>
<svg class="r" style="left:1292.5px;top:170px;" width="11" height="9" viewBox="0 0 11 9" fill="none"><path d="M1.5 8.3 V5 L5.5 0.8 L9.5 5 V8.3 Z" fill="#fdfdfd" stroke="#8a8a8a" stroke-width="1"/></svg>
<div class="r" style="left:5px;top:185px;width:11px;height:560px;background:#ffffff;"></div>
<div class="r" style="left:5px;top:185px;width:11px;height:26px;background:#c6c6c6;"></div>
<div class="r" style="left:11px;top:192px;width:2px;height:1px;background:#555;"></div>
<div class="r" style="left:11px;top:227px;width:2px;height:1px;background:#555;"></div>
<div class="r" style="left:10px;top:245px;width:5px;height:1px;background:#555;"></div>
<div class="r" style="left:11px;top:263px;width:2px;height:1px;background:#555;"></div>
<span class="t" style="left:6px;top:274.8px;width:11px;height:11px;font-size:9px;line-height:11px;color:#444;text-align:center;transform:rotate(-90deg);">1</span>
<div class="r" style="left:11px;top:298px;width:2px;height:1px;background:#555;"></div>
<div class="r" style="left:10px;top:316px;width:5px;height:1px;background:#555;"></div>
<div class="r" style="left:11px;top:333px;width:2px;height:1px;background:#555;"></div>
<span class="t" style="left:6px;top:345.6px;width:11px;height:11px;font-size:9px;line-height:11px;color:#444;text-align:center;transform:rotate(-90deg);">2</span>
<div class="r" style="left:11px;top:369px;width:2px;height:1px;background:#555;"></div>
<div class="r" style="left:10px;top:387px;width:5px;height:1px;background:#555;"></div>
<div class="r" style="left:11px;top:404px;width:2px;height:1px;background:#555;"></div>
<span class="t" style="left:6px;top:416.5px;width:11px;height:11px;font-size:9px;line-height:11px;color:#444;text-align:center;transform:rotate(-90deg);">3</span>
<div class="r" style="left:11px;top:440px;width:2px;height:1px;background:#555;"></div>
<div class="r" style="left:10px;top:457px;width:5px;height:1px;background:#555;"></div>
<div class="r" style="left:11px;top:475px;width:2px;height:1px;background:#555;"></div>
<span class="t" style="left:6px;top:487.4px;width:11px;height:11px;font-size:9px;line-height:11px;color:#444;text-align:center;transform:rotate(-90deg);">4</span>
<div class="r" style="left:11px;top:511px;width:2px;height:1px;background:#555;"></div>
<div class="r" style="left:10px;top:528px;width:5px;height:1px;background:#555;"></div>
<div class="r" style="left:11px;top:546px;width:2px;height:1px;background:#555;"></div>
<span class="t" style="left:6px;top:558.2px;width:11px;height:11px;font-size:9px;line-height:11px;color:#444;text-align:center;transform:rotate(-90deg);">5</span>
<div class="r" style="left:11px;top:581px;width:2px;height:1px;background:#555;"></div>
<div class="r" style="left:10px;top:599px;width:5px;height:1px;background:#555;"></div>
<div class="r" style="left:11px;top:617px;width:2px;height:1px;background:#555;"></div>
<span class="t" style="left:6px;top:629.1px;width:11px;height:11px;font-size:9px;line-height:11px;color:#444;text-align:center;transform:rotate(-90deg);">6</span>
<div class="r" style="left:11px;top:652px;width:2px;height:1px;background:#555;"></div>
<div class="r" style="left:10px;top:670px;width:5px;height:1px;background:#555;"></div>
<div class="r" style="left:11px;top:688px;width:2px;height:1px;background:#555;"></div>
<span class="t" style="left:6px;top:700.0px;width:11px;height:11px;font-size:9px;line-height:11px;color:#444;text-align:center;transform:rotate(-90deg);">7</span>
<div class="r" style="left:11px;top:723px;width:2px;height:1px;background:#555;"></div>
<div class="r" style="left:10px;top:741px;width:5px;height:1px;background:#555;"></div>
<div class="r" style="left:24px;top:185px;width:1325px;height:543px;background:#ffffff;"></div>
<div class="r" style="left:784px;top:449px;width:104px;height:76px;background:#c6c6c6;"></div>
<span class="t" style="left:1027.53px;top:220px;font-size:60px;line-height:67px;letter-spacing:0.225px;color:#141414;font-weight:bold;transform:scaleX(1.0174);transform-origin:0 0;-webkit-text-stroke:0.5px #141414;">Finde</span>
<span class="t" style="left:1205.99px;top:220px;font-size:60px;line-height:67px;letter-spacing:0.663px;color:#141414;font-weight:bold;transform:scaleX(1.0476);transform-origin:0 0;-webkit-text-stroke:0.5px #141414;">die</span>
<div class="r" style="left:1027px;top:279px;width:164px;height:1px;background:#3f73b3;"></div>
<div class="r" style="left:1027px;top:281px;width:164px;height:1px;background:#3f73b3;"></div>
<span class="t" style="left:739.29px;top:302px;font-size:60px;line-height:67px;letter-spacing:0.896px;color:#141414;font-weight:bold;transform:scaleX(1.0806);transform-origin:0 0;-webkit-text-stroke:0.5px #141414;">perfekte</span>
<span class="t" style="left:1014.84px;top:302px;font-size:60px;line-height:67px;letter-spacing:0.719px;color:#141414;font-weight:bold;transform:scaleX(1.0661);transform-origin:0 0;-webkit-text-stroke:0.5px #141414;">Lehrkraft</span>
<span class="t" style="left:867.19px;top:413px;font-size:29.5px;line-height:33px;letter-spacing:0.340px;color:#141414;transform:scaleX(1.0605);transform-origin:0 0;">Online</span>
<span class="t" style="left:967.53px;top:413px;font-size:29.5px;line-height:33px;letter-spacing:0.485px;color:#141414;transform:scaleX(1.0742);transform-origin:0 0;">oder</span>
<span class="t" style="left:1040.19px;top:413px;font-size:29.5px;line-height:33px;letter-spacing:0.297px;color:#141414;transform:scaleX(1.0633);transform-origin:0 0;">Präsenzunterricht,</span>
<span class="t" style="left:541.40px;top:454px;font-size:29.5px;line-height:33px;letter-spacing:0.315px;color:#141414;transform:scaleX(1.0491);transform-origin:0 0;">wähle</span>
<span class="t" style="left:631.19px;top:454px;font-size:29.5px;line-height:33px;letter-spacing:0.165px;color:#141414;transform:scaleX(1.0217);transform-origin:0 0;">aus</span>
<span class="t" style="left:688.54px;top:454px;font-size:29.5px;line-height:33px;letter-spacing:0.419px;color:#141414;transform:scaleX(1.0637);transform-origin:0 0;">einem</span>
<span class="t" style="left:783.54px;top:454px;font-size:29.5px;line-height:33px;letter-spacing:0.220px;color:#141414;transform:scaleX(1.0407);transform-origin:0 0;">Katalog</span>
<span class="t" style="left:896.24px;top:454px;font-size:29.5px;line-height:33px;letter-spacing:0.709px;color:#141414;transform:scaleX(1.0908);transform-origin:0 0;">von</span>
<span class="t" style="left:956.44px;top:454px;font-size:29.5px;line-height:33px;letter-spacing:0.211px;color:#141414;transform:scaleX(1.0216);transform-origin:0 0;">17</span>
<span class="t" style="left:997.04px;top:454px;font-size:29.5px;line-height:33px;letter-spacing:0.413px;color:#141414;transform:scaleX(1.0858);transform-origin:0 0;">Millionen</span>
<span class="t" style="left:1133.95px;top:454px;font-size:29.5px;line-height:33px;letter-spacing:0.393px;color:#141414;transform:scaleX(1.0791);transform-origin:0 0;">Lehrkräften</span>
<div class="r" style="left:318px;top:214px;width:200px;height:500px;background:#e6e6e6;border:1px solid #cbcbcb;box-shadow:0 1px 4px rgba(0,0,0,0.13);"></div>
<span class="t" style="left:332.40px;top:227px;font-size:21px;line-height:23px;letter-spacing:-0.000px;color:#264f91;transform:scaleX(0.9452);transform-origin:0 0;-webkit-text-stroke:0.45px #e6e6e6;">Thesaurus</span>
<svg class="r" style="left:447px;top:234px;" width="11" height="7" viewBox="0 0 11 7" fill="none"><path d="M0.8 0.8 H10.2 L5.5 5.8 Z" fill="#777"/></svg>
<svg class="r" style="left:488px;top:231px;" width="12" height="12" viewBox="0 0 12 12" fill="none"><path d="M1.5 1.5 L10.5 10.5 M10.5 1.5 L1.5 10.5" stroke="#666" stroke-width="2"/></svg>
<div class="r" style="left:334px;top:263.5px;width:14px;height:15px;background:#f6f6f6;"></div>
<svg class="r" style="left:337px;top:266px;" width="8" height="10" viewBox="0 0 8 10" fill="none"><path d="M5.5 1 L1.8 5 L5.5 9" stroke="#c0c0c0" stroke-width="1.1"/></svg>
<div class="r" style="left:358px;top:260px;width:146px;height:21.5px;background:#fff;border:1px solid #ababab;"></div>
<span class="t" style="left:364.38px;top:265px;font-size:11.5px;line-height:12px;letter-spacing:0.164px;color:#333;">Katalog</span>
<svg class="r" style="left:485px;top:262.5px;" width="16" height="16" viewBox="0 0 16 16" fill="none"><circle cx="9.6" cy="6" r="4" stroke="#2b579a" stroke-width="1.7"/><path d="M6.8 9 L1.8 14" stroke="#2b579a" stroke-width="2"/></svg>
<div class="r" style="left:332px;top:296px;width:172px;height:192.5px;background:#fff;border:1px solid #ababab;"></div>
<svg class="r" style="left:338px;top:302px;" width="8" height="8" viewBox="0 0 8 8" fill="none"><path d="M7 1 V7 H1 Z" fill="#444"/></svg>
<span class="t" style="left:351.14px;top:302px;font-size:11.5px;line-height:12px;letter-spacing:0.085px;color:#333;-webkit-text-stroke:0.3px #333;">Verzeichnis (Subst.)</span>
<span class="t" style="left:351.34px;top:321px;font-size:11.5px;line-height:12px;letter-spacing:-0.096px;color:#333;">Verzeichnis</span>
<span class="t" style="left:350.36px;top:340px;font-size:11.5px;line-height:12px;letter-spacing:0.313px;color:#333;">Inventar</span>
<span class="t" style="left:351.40px;top:359px;font-size:11.5px;line-height:12px;letter-spacing:0.418px;color:#333;">Aufstellung</span>
<span class="t" style="left:350.48px;top:378px;font-size:11.5px;line-height:12px;letter-spacing:0.211px;color:#333;">Kartei</span>
<span class="t" style="left:351.40px;top:397px;font-size:11.5px;line-height:12px;letter-spacing:0.388px;color:#333;">Aufzählung</span>
<span class="t" style="left:350.48px;top:416px;font-size:11.5px;line-height:12px;letter-spacing:0.296px;color:#333;">Nachweis</span>
<span class="t" style="left:350.48px;top:435px;font-size:11.5px;line-height:12px;letter-spacing:0.618px;color:#333;">Handbuch</span>
<span class="t" style="left:350.48px;top:454px;font-size:11.5px;line-height:12px;letter-spacing:0.268px;color:#333;">Liste</span>
<span class="t" style="left:350.36px;top:473px;font-size:11.5px;line-height:12px;letter-spacing:0.158px;color:#333;">Index</span>
<div class="r" style="left:486px;top:300px;width:15px;height:186px;background:#f0f0f0;"></div>
<div class="r" style="left:486px;top:300px;width:15px;height:15px;background:#fff;border:1px solid #ababab;"></div>
<svg class="r" style="left:489.5px;top:305px;" width="8" height="5" viewBox="0 0 8 5" fill="none"><path d="M0.5 4.5 L4 0.8 L7.5 4.5 Z" fill="#606060"/></svg>
<div class="r" style="left:486px;top:315px;width:15px;height:103px;background:#fff;border:1px solid #ababab;"></div>
<div class="r" style="left:486px;top:470px;width:15px;height:15.5px;background:#fff;border:1px solid #ababab;"></div>
<svg class="r" style="left:489.5px;top:475.5px;" width="8" height="5" viewBox="0 0 8 5" fill="none"><path d="M0.5 0.5 L4 4.2 L7.5 0.5 Z" fill="#606060"/></svg>
<div class="r" style="left:333px;top:504.5px;width:170px;height:1px;background:#e0e0e0;"></div>
<div class="r" style="left:333px;top:661px;width:170px;height:1px;background:#e0e0e0;"></div>
<div class="r" style="left:332px;top:678px;width:172px;height:21.5px;background:#fff;border:1px solid #ababab;"></div>
<span class="t" style="left:337.68px;top:684px;font-size:11.5px;line-height:12px;letter-spacing:0.183px;color:#333;">Deutsch (Deutschland)</span>
<svg class="r" style="left:489.5px;top:686px;" width="9" height="6" viewBox="0 0 9 6" fill="none"><path d="M0.5 0.5 H8.5 L4.5 5 Z" fill="#606060"/></svg>
<div class="r" style="left:0px;top:745px;width:1366px;height:23px;background:#f3f2f1;border-top:1px solid #c8c8c8;"></div>
<span class="t" style="left:7.70px;top:750px;font-size:11px;line-height:12px;letter-spacing:0.067px;color:#444;">Seite 1 von 1</span>
<span class="t" style="left:88.47px;top:750px;font-size:11px;line-height:12px;letter-spacing:0.026px;color:#444;">Zeile: 4</span>
<span class="t" style="left:144.28px;top:750px;font-size:11px;line-height:12px;letter-spacing:0.318px;color:#444;">1 von 15 Wörtern</span>
<svg class="r" style="left:251px;top:748px;" width="16" height="16" viewBox="0 0 16 16" fill="none"><path d="M1.5 2 H6 Q7.5 2 7.5 3.5 V13 Q7.5 12 6 12 H1.5 Z M13.5 7 V2 H9 Q7.5 2 7.5 3.5" stroke="#444" stroke-width="1.1"/><path d="M9 9 L14.5 14.5 M14.5 9 L9 14.5" stroke="#444" stroke-width="1.2"/></svg>
<span class="t" style="left:283.62px;top:750px;font-size:11px;line-height:12px;letter-spacing:0.234px;color:#444;">Deutsch (Deutschland)</span>
<svg class="r" style="left:417px;top:748px;" width="16" height="16" viewBox="0 0 16 16" fill="none"><circle cx="7.5" cy="2.8" r="1.7" stroke="#444" stroke-width="1"/><path d="M1.5 5.2 L5.5 6.5 H9.5 L13.5 5.2 M5.5 6.5 V10 L3.8 14.5 M9.5 6.5 V9" stroke="#444" stroke-width="1.1"/><path d="M7.5 12.3 L9.8 14.6 L14.5 9.8" stroke="#444" stroke-width="1.1"/></svg>
<span class="t" style="left:436.12px;top:750px;font-size:11px;line-height:12px;letter-spacing:0.189px;color:#444;">Barrierefreiheit: Keine Probleme</span>
<svg class="r" style="left:1003px;top:748px;" width="15" height="15" viewBox="0 0 15 15" fill="none"><path d="M0.6 4 V0.6 H4 M11 0.6 H14.4 V4 M14.4 11 V14.4 H11 M4 14.4 H0.6 V11" stroke="#444" stroke-width="1.1"/><path d="M4 3 H8.5 L11 5.5 V12 H4 Z M8.5 3 V5.5 H11" stroke="#444" stroke-width="1"/></svg>
<span class="t" style="left:1019.62px;top:750px;font-size:11px;line-height:12px;letter-spacing:0.322px;color:#444;">Fokus</span>
<svg class="r" style="left:1074.5px;top:749px;" width="16" height="13" viewBox="0 0 16 13" fill="none"><path d="M0.8 0.8 H6.3 Q7.8 0.8 7.8 2.2 V12 Q7.8 11 6.3 11 H0.8 Z M14.8 0.8 H9.3 Q7.8 0.8 7.8 2.2 V12 Q7.8 11 9.3 11 H14.8 Z" stroke="#444" stroke-width="1.1"/><path d="M2.6 3.5 H5.8 M2.6 5.7 H5.8 M2.6 7.9 H5.8 M9.8 3.5 H13 M9.8 5.7 H13 M9.8 7.9 H13" stroke="#444" stroke-width="1.1"/></svg>
<div class="r" style="left:1103px;top:746px;width:40px;height:22px;background:#c8c8c8;"></div>
<svg class="r" style="left:1116px;top:749px;" width="13" height="14" viewBox="0 0 13 14" fill="none"><rect x="0.6" y="0.6" width="11.8" height="12.8" stroke="#333" stroke-width="1.1"/><path d="M2.8 3.5 H10.2 M2.8 5.7 H10.2 M2.8 7.9 H10.2 M2.8 10.1 H10.2" stroke="#333" stroke-width="1"/></svg>
<svg class="r" style="left:1155px;top:749px;" width="16" height="15" viewBox="0 0 16 15" fill="none"><path d="M8 13.4 H0.6 V0.6 H12.4 V6" stroke="#444" stroke-width="1.1"/><path d="M2.8 3.5 H10.2 M2.8 5.7 H10.2 M2.8 7.9 H7 M2.8 10.1 H6" stroke="#444" stroke-width="1"/><circle cx="11.3" cy="10.5" r="3.7" stroke="#444" stroke-width="1"/><path d="M7.6 10.5 H15 M11.3 6.8 V14.2" stroke="#444" stroke-width="0.8"/></svg>
<div class="r" style="left:1189px;top:755.5px;width:8px;height:1px;background:#444;"></div>
<div class="r" style="left:1202px;top:755.5px;width:100px;height:1px;background:#666;"></div>
<div class="r" style="left:1252.5px;top:752px;width:1px;height:8px;background:#666;"></div>
<div class="r" style="left:1259.7px;top:750.5px;width:5px;height:11.5px;background:#767676;"></div>
<div class="r" style="left:1306.5px;top:755.5px;width:9px;height:1px;background:#444;"></div>
<div class="r" style="left:1310.5px;top:751.5px;width:1px;height:9px;background:#444;"></div>
<span class="t" style="left:1327.67px;top:750px;font-size:11px;line-height:12px;letter-spacing:-0.119px;color:#444;">188 %</span>
<div class="r" style="left:0px;top:766px;width:1366px;height:1px;background:#c4c4c4;"></div>
<div class="r" style="left:0px;top:767px;width:1366px;height:1px;background:#e4e4e4;"></div>
<div class="r" style="left:0px;top:766px;width:48px;height:2px;background:#3a3a3a;"></div>
<div class="r" style="left:392px;top:766px;width:658px;height:2px;background:#3a3a3a;"></div>
<div class="r" style="left:1160px;top:766px;width:206px;height:2px;background:#3a3a3a;"></div>
</body></html>
